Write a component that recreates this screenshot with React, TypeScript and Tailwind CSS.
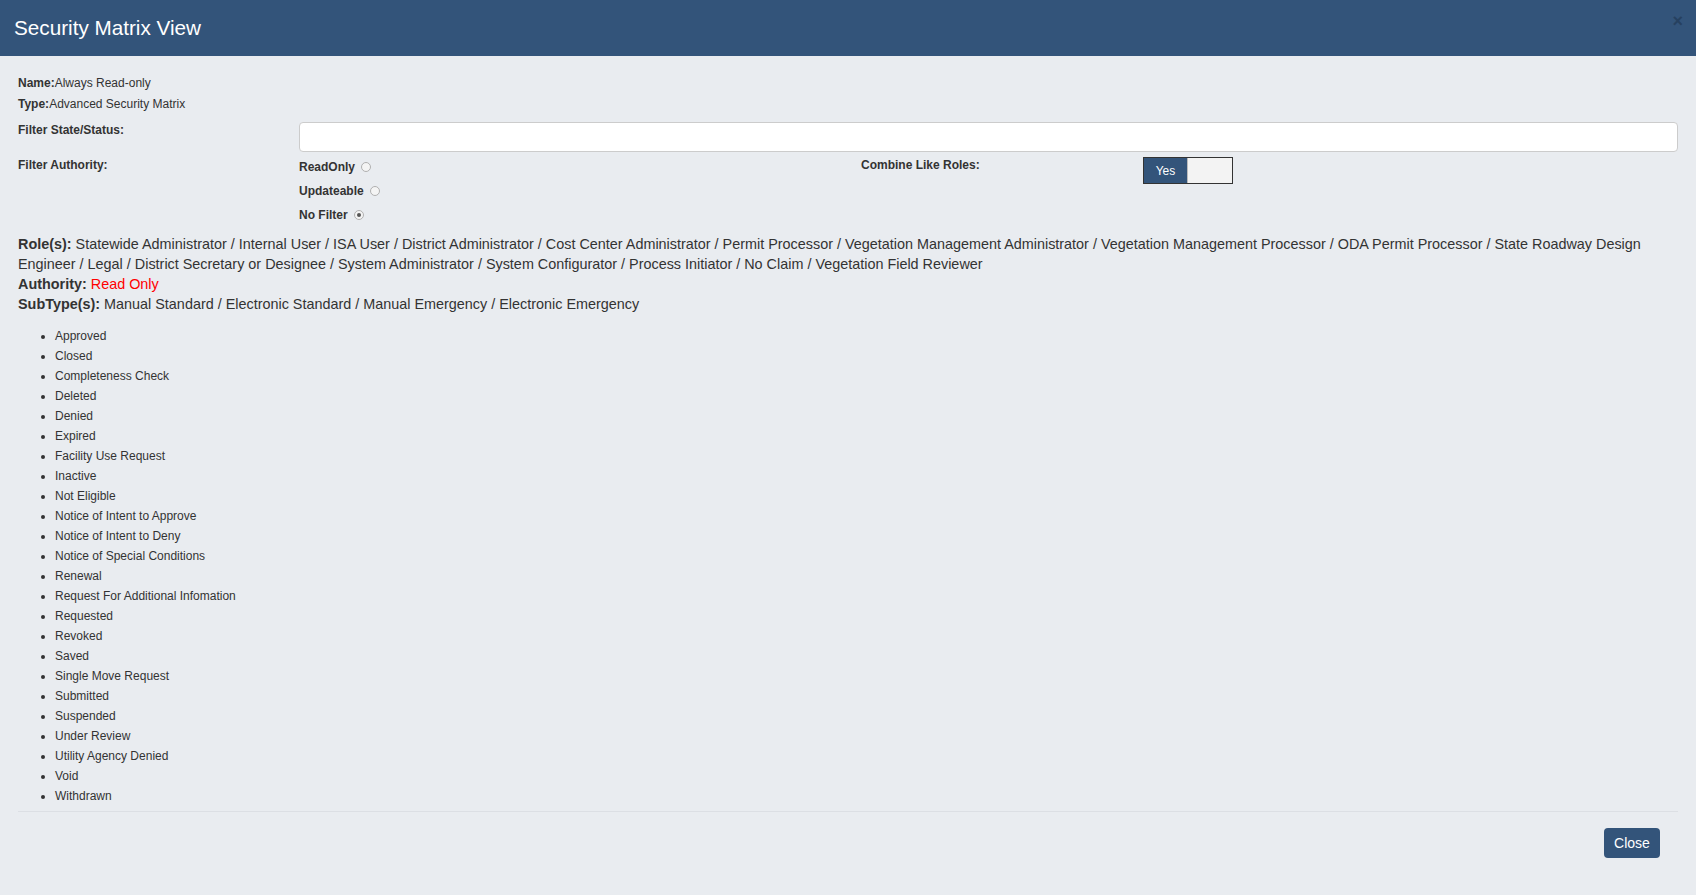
import React from "react";

const statuses = [
  "Approved",
  "Closed",
  "Completeness Check",
  "Deleted",
  "Denied",
  "Expired",
  "Facility Use Request",
  "Inactive",
  "Not Eligible",
  "Notice of Intent to Approve",
  "Notice of Intent to Deny",
  "Notice of Special Conditions",
  "Renewal",
  "Request For Additional Infomation",
  "Requested",
  "Revoked",
  "Saved",
  "Single Move Request",
  "Submitted",
  "Suspended",
  "Under Review",
  "Utility Agency Denied",
  "Void",
  "Withdrawn",
];

function Radio({ label, checked }: { label: string; checked?: boolean }) {
  return (
    <div className="flex items-center h-[24px]">
      <span className="font-bold text-[12px]">{label}</span>
      <span className="ml-[6px] w-[10px] h-[10px] rounded-full border border-[#b0b0b0] bg-[#f4f4f4] flex items-center justify-center">
        {checked && <span className="w-[4px] h-[4px] rounded-full bg-[#555]" />}
      </span>
    </div>
  );
}

export default function App() {
  return (
    <div
      className="min-h-[895px] bg-[#e9ecf0] text-[#333]"
      style={{ fontFamily: '"Liberation Sans", Arial, sans-serif' }}
    >
      <div className="h-[56px] bg-[#33547a] flex items-center justify-between pl-[14px] pr-[13px]">
        <h1 className="text-white text-[20.7px] leading-none">Security Matrix View</h1>
        <span className="text-[#1f3550] opacity-60 text-[18px] font-bold leading-none -mt-[14px]">×</span>
      </div>

      <div className="px-[18px] pt-[17px]">
        <div className="text-[12px] leading-[20px]">
          <div>
            <span className="font-bold">Name:</span>Always Read-only
          </div>
          <div className="mt-[1px]">
            <span className="font-bold">Type:</span>Advanced Security Matrix
          </div>
        </div>

        <div className="grid grid-cols-[281px_1fr] mt-[6px]">
          <div className="text-[12px] font-bold leading-[20px]">Filter State/Status:</div>
          <div className="h-[30px] mt-[2px] bg-white border border-[#ccc] rounded-[4px]" />
        </div>

        <div className="grid grid-cols-[281px_562px_282px_1fr]">
          <div className="text-[12px] font-bold leading-[20px] mt-[3px]">Filter Authority:</div>
          <div className="flex flex-col mt-[3px]">
            <Radio label="ReadOnly" />
            <Radio label="Updateable" />
            <Radio label="No Filter" checked />
          </div>
          <div className="text-[12px] font-bold leading-[20px] mt-[3px]">Combine Like Roles:</div>
          <div className="mt-[5px]">
            <div className="flex w-[90px] h-[27px] border border-[#333]">
              <div className="w-[43px] bg-[#33547a] text-white text-[12px] flex items-center justify-center">
                Yes
              </div>
              <div className="flex-1 bg-[#f3f3f3] border-l border-[#bbb]" />
            </div>
          </div>
        </div>

        <div className="text-[14.4px] leading-[20px] mt-[7px]">
          <p>
            <span className="font-bold">Role(s): </span>Statewide Administrator / Internal User / ISA User / District
            Administrator / Cost Center Administrator / Permit Processor / Vegetation Management Administrator /
            Vegetation Management Processor / ODA Permit Processor / State Roadway Design Engineer / Legal / District
            Secretary or Designee / System Administrator / System Configurator / Process Initiator / No Claim /
            Vegetation Field Reviewer
          </p>
          <p>
            <span className="font-bold">Authority: </span>
            <span className="text-[#ff0000]">Read Only</span>
          </p>
          <p>
            <span className="font-bold">SubType(s): </span>Manual Standard / Electronic Standard / Manual Emergency /
            Electronic Emergency
          </p>
        </div>

        <ul className="mt-[12px] pl-[37px] text-[12px] leading-[20px] list-disc">
          {statuses.map((s) => (
            <li key={s}>{s}</li>
          ))}
        </ul>

        <div className="mt-[5px] border-t border-[#dcdfe4]" />

        <div className="flex justify-end pt-[16px] pr-[18px]">
          <button className="h-[30px] w-[56px] rounded-[4px] bg-[#33547a] text-white text-[14px]">Close</button>
        </div>
      </div>
    </div>
  );
}
